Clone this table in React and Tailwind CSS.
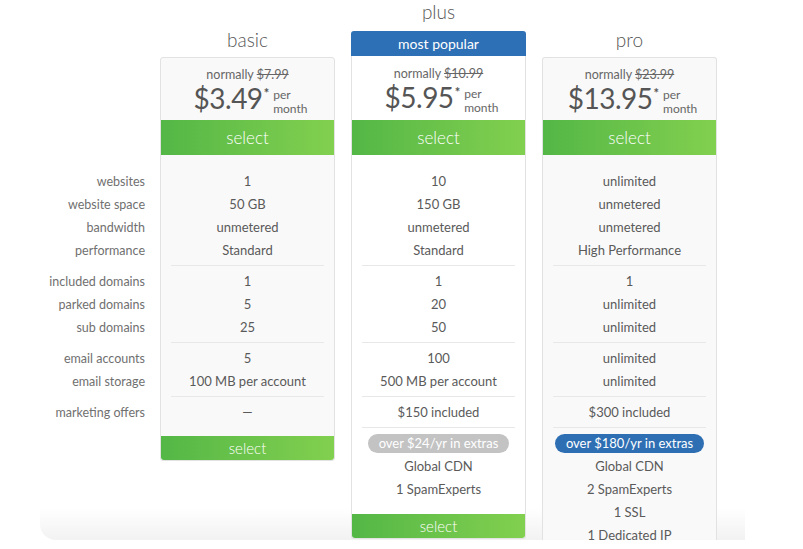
import React from "react";

const labels = [
  ["websites", "website space", "bandwidth", "performance"],
  ["included domains", "parked domains", "sub domains"],
  ["email accounts", "email storage"],
  ["marketing offers"],
];

const plans = [
  {
    name: "basic",
    normally: "$7.99",
    price: "$3.49",
    groups: [
      ["1", "50 GB", "unmetered", "Standard"],
      ["1", "5", "25"],
      ["5", "100 MB per account"],
      ["—"],
    ],
  },
  {
    name: "plus",
    popular: true,
    normally: "$10.99",
    price: "$5.95",
    groups: [
      ["10", "150 GB", "unmetered", "Standard"],
      ["1", "20", "50"],
      ["100", "500 MB per account"],
      ["$150 included"],
    ],
    badge: "over $24/yr in extras",
    badgeBlue: false,
    extras: ["Global CDN", "1 SpamExperts"],
  },
  {
    name: "pro",
    normally: "$23.99",
    price: "$13.95",
    groups: [
      ["unlimited", "unmetered", "unmetered", "High Performance"],
      ["1", "unlimited", "unlimited"],
      ["unlimited", "unlimited"],
      ["$300 included"],
    ],
    badge: "over $180/yr in extras",
    badgeBlue: true,
    extras: ["Global CDN", "2 SpamExperts", "1 SSL", "1 Dedicated IP"],
    open: true,
  },
];

const Groups = ({ groups, hideLines }) => (
  <div>
    {groups.map((rows, gi) => (
      <div key={gi}>
        {gi > 0 && (
          <div
            className={`mx-[10px] mt-[3px] mb-[4px] border-t ${
              hideLines ? "border-transparent" : "border-[#e8e8e8]"
            }`}
          />
        )}
        {rows.map((r, ri) => (
          <div key={ri} className="h-[23px] leading-[23px] whitespace-nowrap">
            {r}
          </div>
        ))}
      </div>
    ))}
  </div>
);

const SelectButton = ({ big }) => (
  <div
    className={`bg-linear-to-r from-[#53b746] to-[#82d04f] text-white font-light text-center ${
      big ? "h-[35px] leading-[35px] text-[17px]" : "h-[24px] leading-[24px] text-[15px] rounded-b-[3px]"
    }`}
  >
    select
  </div>
);

const PlanCard = ({ plan }) => (
  <div className="w-[175px] flex flex-col">
    {plan.popular ? (
      <>
        <div className="h-[31px] flex items-end justify-center pb-[7px] text-[19px] leading-[24px] font-light text-[#555]">
          {plan.name}
        </div>
        <div className="h-[25px] leading-[25px] bg-[#2e70b5] rounded-t-[3px] text-white text-[14px] text-center">
          most popular
        </div>
      </>
    ) : (
      <div className="h-[57px] flex items-end justify-center pb-[5px] text-[19px] leading-[24px] font-light text-[#555]">
        {plan.name}
      </div>
    )}
    <div
      className={`border-x border-[#e2e2e2] ${plan.popular ? "bg-white" : "bg-[#f9f9f9] border-t rounded-t-[3px]"} ${
        plan.open ? "" : "border-b rounded-b-[3px]"
      }`}
    >
      <div className={`${plan.popular ? "h-[64px] pt-[10px]" : "h-[62px] pt-[9px]"} text-center text-[#555]`}>
        <div className="text-[12.5px] leading-[16px] text-[#666]">
          normally <span className="line-through">{plan.normally}</span>
        </div>
        <div className="flex items-start justify-center mt-[1px] pl-[6px]">
          <span className="text-[28px] leading-[29px] tracking-[-0.5px]">{plan.price}</span>
          <span className="text-[13px] leading-[14px] font-bold ml-[1px] mt-[2px]">*</span>
          <span className="flex flex-col items-start text-[12px] leading-[14px] pt-[4px] ml-[4px] text-[#666]">
            <span>per</span>
            <span>month</span>
          </span>
        </div>
      </div>
      <SelectButton big />
      <div className="pt-[15px] text-center text-[13px] text-[#5a5a5a]">
        <Groups groups={plan.groups} />
        {plan.badge ? (
          <>
            <div className="mx-[10px] mt-[3px] border-t border-[#e8e8e8]" />
            <div className="pt-[6px] flex justify-center">
              <span
                className={`h-[19px] leading-[19px] px-[11px] rounded-full text-white text-[13px] ${
                  plan.badgeBlue ? "bg-[#2e6fb4]" : "bg-[#c3c3c3]"
                }`}
              >
                {plan.badge}
              </span>
            </div>
            <div className="pt-[2px]">
              {plan.extras.map((e) => (
                <div key={e} className="h-[23px] leading-[23px]">
                  {e}
                </div>
              ))}
            </div>
            {!plan.open && <div className="h-[13px]" />}
          </>
        ) : (
          <div className="h-[12px]" />
        )}
      </div>
      {!plan.open && <SelectButton />}
    </div>
  </div>
);

export default function App() {
  return (
    <div className="bg-white h-[549px] font-['Lato',_'Liberation_Sans',_sans-serif]">
      <div className="relative isolate h-[540px] overflow-hidden">
        <div className="absolute left-[40px] top-[508px] w-[705px] h-[32px] -z-10 rounded-bl-[16px] bg-linear-to-b from-white to-[#f2f2f2]" />
        <div className="flex">
          <div className="w-[160px] shrink-0 pr-[15px] text-right text-[12.5px] text-[#707070]">
            <div className="h-[170px]" />
            <Groups groups={labels} hideLines />
          </div>
          <div className="flex gap-[16px]">
            {plans.map((p) => (
              <PlanCard key={p.name} plan={p} />
            ))}
          </div>
        </div>
      </div>
    </div>
  );
}
